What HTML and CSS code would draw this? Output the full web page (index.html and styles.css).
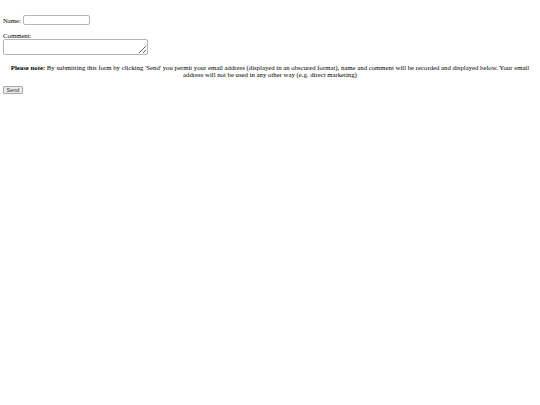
FILE: index.html
```html
<!DOCTYPE html>
<html>
<head>
<meta charset="utf-8">
<link rel="stylesheet" href="styles.css">
</head>
<body>
<form class="form">
  <div class="row-name">
    <label class="lbl">Name:</label>
    <input class="name-input" type="text">
  </div>
  <div class="row-comment">
    <label class="lbl">Comment:</label>
    <textarea class="comment"></textarea>
  </div>
  <p class="note"><b>Please note:</b> By submitting this form by clicking 'Send' you permit your email address (displayed in an obscured format), name and comment will be recorded and displayed below. Your email address will not be used in any other way (e.g. direct marketing)</p>
  <button class="send" type="button">Send</button>
</form>
</body>
</html>
```
FILE: styles.css
```css
html, body { margin: 0; padding: 0; background: #fff; }
body {
  font-family: "Liberation Serif", "Times New Roman", serif;
  font-size: 6.75px;
  line-height: 7px;
  color: #000;
  padding: 0 3px;
}
.form { padding-top: 15px; }
.row-name { display: flex; align-items: center; gap: 2px; height: 10px; }
.lbl { display: block; }
.name-input {
  box-sizing: border-box;
  width: 67px; height: 10px;
  margin: 0; padding: 0 2px;
  border: 1px solid #b5b5b5;
  border-radius: 2px;
  font-size: 7px;
}
.row-comment { margin-top: 7px; }
.comment {
  display: block;
  box-sizing: border-box;
  width: 145px; height: 16px;
  margin: 0;
  border: 1px solid #b5b5b5;
  border-radius: 2px;
  font-size: 7px;
}
.note {
  text-align: center;
  margin: 9px 0 0;
}
.send {
  display: block;
  margin-top: 8px;
  box-sizing: border-box;
  width: 20px; height: 8px;
  padding: 0;
  font-family: "Liberation Sans", Arial, sans-serif;
  font-size: 5.5px;
  line-height: 6px;
  border: 1px solid #a8a8a8;
  border-radius: 1px;
  background: #ececec;
  color: #333;
}
```
